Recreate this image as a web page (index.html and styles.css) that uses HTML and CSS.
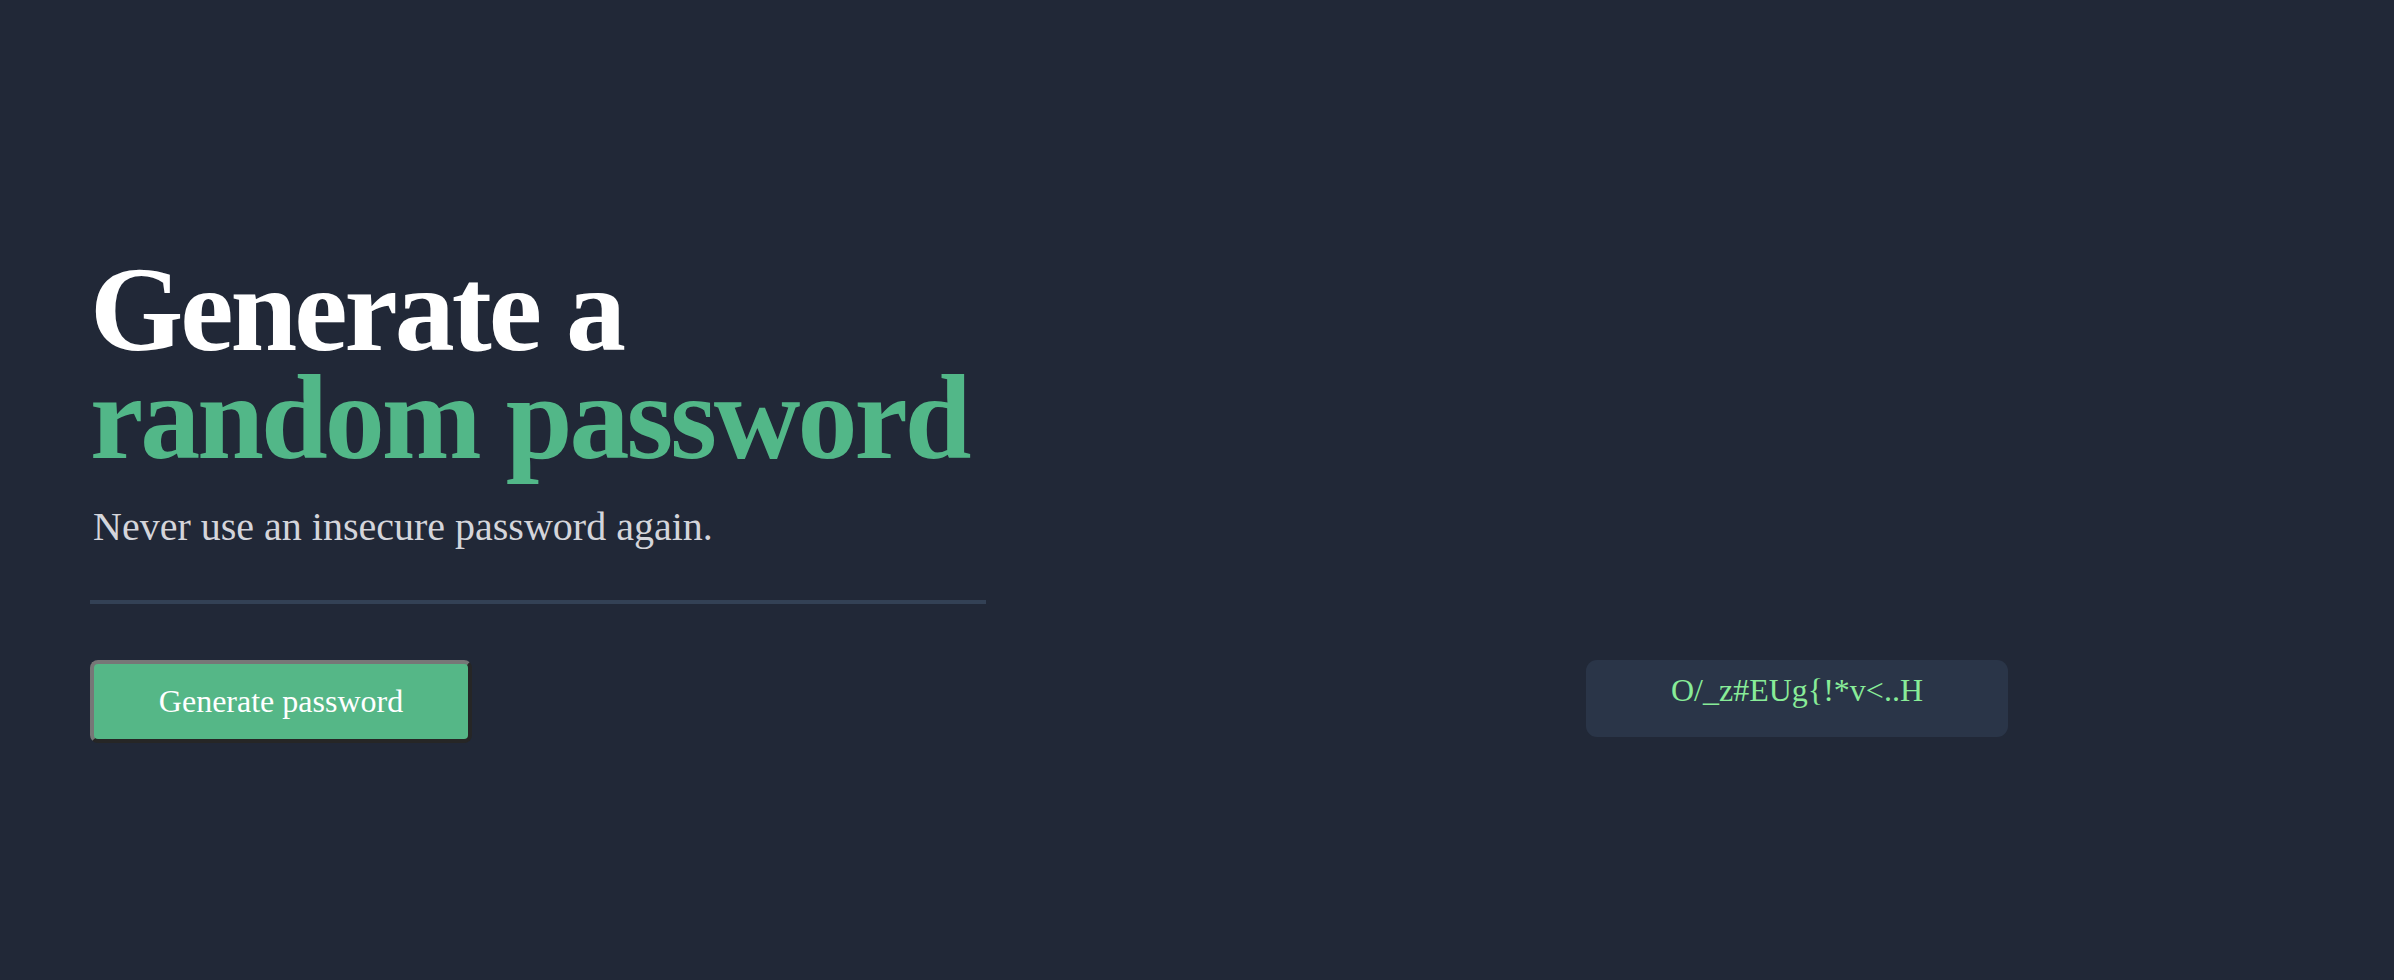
FILE: index.html
```html
<!DOCTYPE html>
<html lang="en">
<head>
<meta charset="utf-8">
<title>Password generator</title>
<link rel="stylesheet" href="styles.css">
</head>
<body>
<main class="page">
  <section class="intro">
    <h1 class="title">Generate a<br><span class="accent">random password</span></h1>
    <p class="subtitle">Never use an insecure password again.</p>
    <div class="divider"></div>
  </section>
  <section class="actions">
    <button class="generate" type="button">Generate password</button>
    <div class="result">O/_z#EUg{!*v&lt;..H</div>
  </section>
</main>
</body>
</html>
```
FILE: styles.css
```css
html, body {
  margin: 0;
  padding: 0;
  background: #212837;
}

body {
  font-family: "Liberation Serif", "Times New Roman", serif;
  min-height: 980px;
}

.page {
  padding: 256px 0 0 90px;
}

.intro {
  width: 896px;
}

.title {
  margin: 0;
  font-size: 120px;
  font-weight: 700;
  line-height: 108px;
  letter-spacing: -0.025em;
  color: #ffffff;
}

.accent {
  color: #52b788;
}

.subtitle {
  margin: 32px 0 0 3px;
  font-size: 40px;
  line-height: 46px;
  color: #d4d5db;
}

.divider {
  margin-top: 50px;
  height: 4px;
  background: #334155;
}

.actions {
  margin-top: 56px;
  display: grid;
  grid-template-columns: 1496px 422px;
  align-items: start;
}

.generate {
  justify-self: start;
  box-sizing: border-box;
  width: 382px;
  height: 83px;
  padding: 0;
  border-width: 4px;
  border-style: solid;
  border-color: #777777 #262626 #262626 #777777;
  border-radius: 8px;
  background: #55b787;
  color: #ffffff;
  font-family: "Liberation Serif", "Times New Roman", serif;
  font-size: 32px;
  text-align: center;
}

.result {
  box-sizing: border-box;
  height: 77px;
  padding-top: 12px;
  border-radius: 11px;
  background: #2a3548;
  color: #88ec98;
  font-size: 32px;
  line-height: 37px;
  text-align: center;
}
```
